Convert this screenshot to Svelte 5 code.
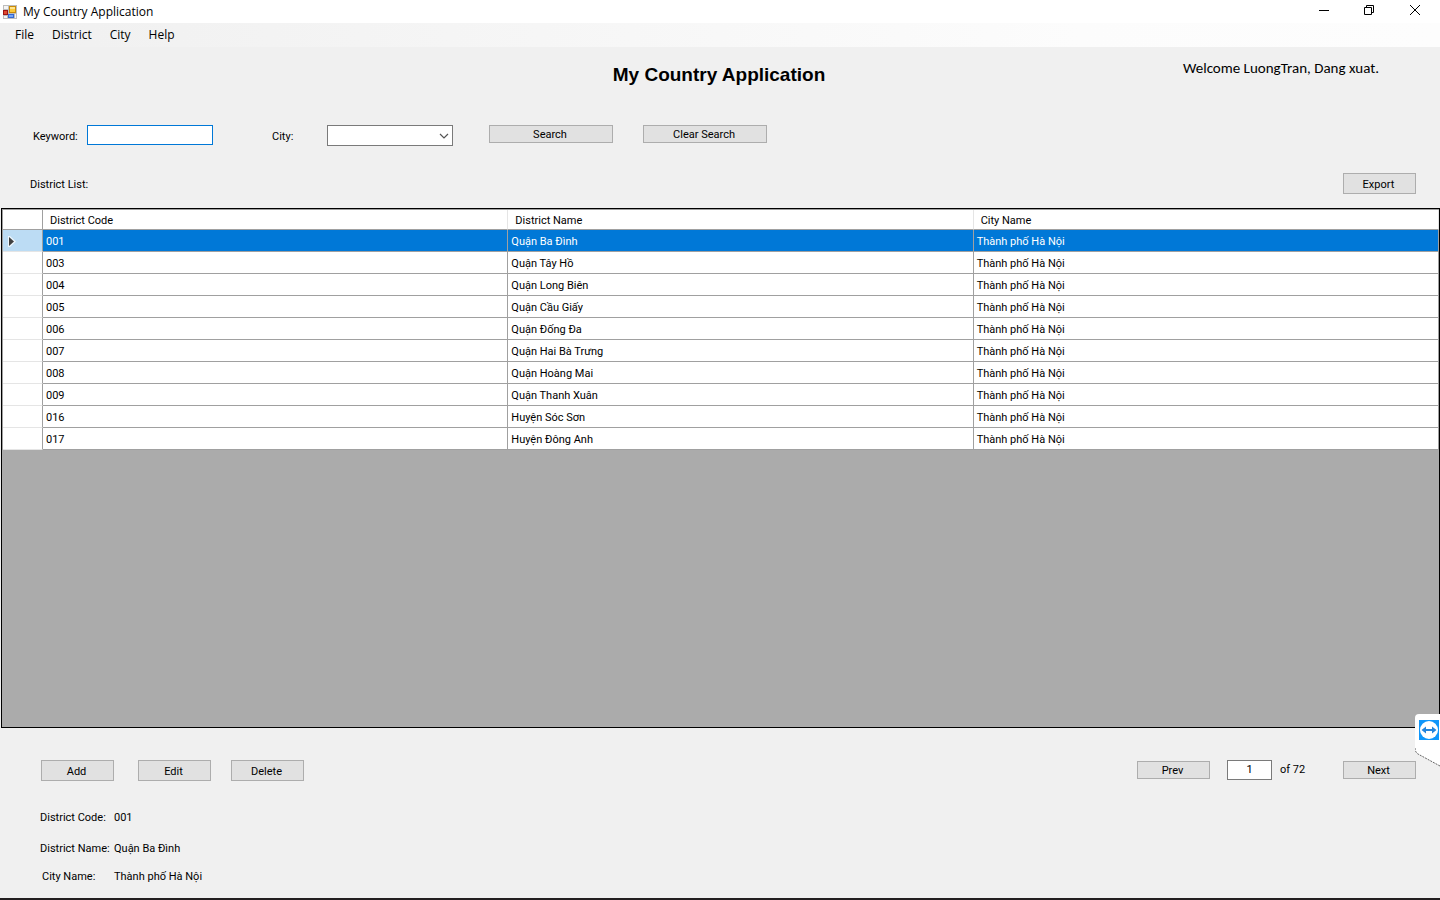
<script>
  const menus = ['File', 'District', 'City', 'Help'];
  const rows = [
    ['001', 'Quận Ba Đình'],
    ['003', 'Quận Tây Hồ'],
    ['004', 'Quận Long Biên'],
    ['005', 'Quận Cầu Giấy'],
    ['006', 'Quận Đống Đa'],
    ['007', 'Quận Hai Bà Trưng'],
    ['008', 'Quận Hoàng Mai'],
    ['009', 'Quận Thanh Xuân'],
    ['016', 'Huyện Sóc Sơn'],
    ['017', 'Huyện Đông Anh']
  ].map(([code, name]) => ({ code, name, city: 'Thành phố Hà Nội' }));

  let selected = $state(0);
  let keyword = $state('');
  let city = $state('');
  let page = $state('1');
  const current = $derived(rows[selected]);
</script>

<div class="window">
  <header class="titlebar">
    <svg class="appicon" width="14" height="14" viewBox="0 0 14 14" aria-hidden="true">
      <path d="M0 0h14v14H0z" fill="#bdbdbd" />
      <path d="M1 1h4v3H1zM1 11h3v2H1zM12 9h1v4h-1z" fill="#f4f4f4" />
      <path d="M6 1h7v7H6z" fill="#c98a08" />
      <path d="M7 2h5v5H7z" fill="#fbc93a" />
      <path d="M7 2h5v2H7z" fill="#ffe48b" />
      <path d="M0 5h5v5H0z" fill="#9d1414" />
      <path d="M1 6h3v3H1z" fill="#e0492f" />
      <path d="M5 9h6v4H5z" fill="#3668cf" />
      <path d="M6 10h4v2H6z" fill="#76a5f5" />
    </svg>
    <span class="caption">My Country Application</span>
    <div class="winbuttons">
      <button aria-label="Minimize">
        <svg width="12" height="12" viewBox="0 0 12 12"><path d="M1 5.500h10" stroke="#000" /></svg>
      </button>
      <button aria-label="Restore">
        <svg width="12" height="12" viewBox="0 0 12 12" fill="none" stroke="#000">
          <path d="M1.500 2.500h7v7h-7zM3.500 2.500v-2h7v7h-2" />
        </svg>
      </button>
      <button aria-label="Close">
        <svg width="12" height="12" viewBox="0 0 12 12"><path d="M1 0l10 10M11 0L1 10" stroke="#000" /></svg>
      </button>
    </div>
  </header>

  <nav class="menubar">
    {#each menus as item}
      <button>{item}</button>
    {/each}
  </nav>

  <div class="heading">
    <h1>My Country Application</h1>
    <p>Welcome LuongTran, Dang xuat.</p>
  </div>

  <form class="search" onsubmit={(e) => e.preventDefault()}>
    <label class="kw" for="keyword">Keyword:</label>
    <input id="keyword" type="text" bind:value={keyword} />
    <label class="ct" for="city">City:</label>
    <div class="combo">
      <select id="city" bind:value={city}>
        <option value=""></option>
        <option>Thành phố Hà Nội</option>
      </select>
      <svg width="10" height="6" viewBox="0 0 10 6" aria-hidden="true">
        <path d="M1 1l4 4 4-4" fill="none" stroke="#555" stroke-width="1.200" />
      </svg>
    </div>
    <button class="btn wide first" type="submit">Search</button>
    <button class="btn wide" type="reset">Clear Search</button>
  </form>

  <div class="listbar">
    <span>District List:</span>
    <button class="btn tall">Export</button>
  </div>

  <main class="grid">
    <table>
      <colgroup><col class="mark" /><col /><col /><col /></colgroup>
      <thead>
        <tr><th></th><th>District Code</th><th>District Name</th><th>City Name</th></tr>
      </thead>
      <tbody>
        {#each rows as row, i}
          <tr class:selected={i === selected} onclick={() => (selected = i)}>
            <td class="rowhead">
              {#if i === selected}
                <svg width="8" height="11" viewBox="0 0 8 11" aria-hidden="true">
                  <path d="M0 0h2l6 5.500-6 5.500H0z" fill="#fff" opacity=".7" />
                  <path d="M1 1l5 4.500-5 4.500z" fill="#404040" />
                </svg>
              {/if}
            </td>
            <td>{row.code}</td>
            <td>{row.name}</td>
            <td>{row.city}</td>
          </tr>
        {/each}
      </tbody>
    </table>
  </main>

  <div class="actions">
    <button class="btn tall">Add</button>
    <button class="btn tall">Edit</button>
    <button class="btn tall">Delete</button>
    <div class="pager">
      <button class="btn">Prev</button>
      <input type="text" aria-label="Page" bind:value={page} />
      <span>of 72</span>
      <button class="btn">Next</button>
    </div>
  </div>

  <dl class="details">
    <dt>District Code:</dt><dd>{current.code}</dd>
    <dt>District Name:</dt><dd>{current.name}</dd>
    <dt class="in">City Name:</dt><dd>{current.city}</dd>
  </dl>

  <div class="taskbar"></div>

  <svg class="remote" width="25" height="54" viewBox="0 0 25 54" aria-hidden="true">
    <path d="M25 0H4Q0 0 0 4V35Q0 38 3 40L25 52z" fill="#fff" />
    <path d="M0 34Q0 38 3 40L25 52" fill="none" stroke="#666" stroke-dasharray="2 1" />
    <path d="M4 6h20v20H4z" fill="#0f96fa" />
    <circle cx="14" cy="16" r="9" fill="#fff" />
    <path d="M6.500 16l4.500-3.500v2.500h6v-2.500l4.500 3.500-4.500 3.500v-2.500h-6v2.500z" fill="#2384dc" />
  </svg>
</div>

<style>
  :global(body) {
    margin: 0;
  }
  .window {
    position: relative;
    display: flex;
    flex-direction: column;
    min-height: 100vh;
    background: #f0f0f0;
    color: #000;
    font: 11px/16px Roboto, "Liberation Sans", sans-serif;
  }
  button,
  input,
  select {
    box-sizing: border-box;
    margin: 0;
    padding: 0;
    border: 0;
    border-radius: 0;
    outline: none;
    color: inherit;
    font: inherit;
  }
  .titlebar {
    display: flex;
    align-items: center;
    height: 23px;
    padding-left: 3px;
    background: #fff;
    font-family: "Open Sans", sans-serif;
    font-size: 12px;
  }
  .caption {
    margin-left: 6px;
  }
  .winbuttons {
    display: flex;
    height: 100%;
    margin-left: auto;
    padding-right: 2px;
  }
  .winbuttons button {
    display: grid;
    place-items: center;
    width: 46px;
    height: 21px;
    background: none;
  }
  .winbuttons button:first-child {
    width: 44px;
  }
  .menubar {
    display: flex;
    height: 24px;
    padding-left: 6px;
    background: linear-gradient(90deg, #f0f0f0, #fcfcfc 75%, #fdfdfd);
    font-family: "Open Sans", sans-serif;
    font-size: 12px;
  }
  .menubar button {
    padding: 0 9px;
    background: none;
  }
  .heading {
    display: grid;
    grid-template-columns: 1fr auto 1fr;
    height: 78px;
    padding: 12px 2px 0 0;
    box-sizing: border-box;
  }
  h1 {
    grid-column: 2;
    margin: 0;
    font: bold 19px/32px "Liberation Sans", sans-serif;
  }
  .heading p {
    justify-self: end;
    margin: 0 59px 0 0;
    font: 15px/18px Carlito, Lato, sans-serif;
  }
  .search {
    display: flex;
    align-items: flex-start;
    height: 48px;
    padding-left: 33px;
  }
  .search label {
    line-height: 24px;
  }
  .kw {
    width: 54px;
  }
  .ct {
    width: 55px;
    margin-left: 59px;
  }
  .search input {
    width: 126px;
    height: 20px;
    padding: 0 3px;
    border: 1px solid #0078d7;
    background: #fff;
  }
  .combo {
    position: relative;
    width: 126px;
    height: 21px;
  }
  .combo select {
    width: 100%;
    height: 100%;
    padding: 0 18px 0 3px;
    border: 1px solid #7a7a7a;
    background: #fff;
    appearance: none;
  }
  .combo svg {
    position: absolute;
    top: 8px;
    right: 4px;
    pointer-events: none;
  }
  .btn {
    width: 73px;
    height: 18px;
    padding: 1px 2px 0 0;
    border: 1px solid #adadad;
    background: #e1e1e1;
    line-height: 15px;
    text-align: center;
  }
  .wide {
    width: 124px;
    margin-left: 30px;
  }
  .wide.first {
    margin-left: 36px;
  }
  .tall {
    height: 21px;
  }
  .listbar {
    display: flex;
    justify-content: space-between;
    height: 35px;
    padding: 0 24px 0 30px;
    line-height: 24px;
  }
  .grid {
    flex: 1;
    margin-left: 1px;
    border: 1px solid #000;
    background: #ababab;
  }
  table {
    width: 100%;
    table-layout: fixed;
    border-collapse: separate;
    border-spacing: 0;
    border-top: 1px solid #a0a0a0;
    border-left: 1px solid #a0a0a0;
  }
  .mark {
    width: 40px;
  }
  th,
  td {
    box-sizing: border-box;
    height: 22px;
    padding: 2px 3px 0;
    border-right: 1px solid #a0a0a0;
    border-bottom: 1px solid #a0a0a0;
    background: #fff;
    line-height: 19px;
    text-align: left;
    white-space: nowrap;
  }
  th {
    height: 20px;
    padding: 2px 7px 0;
    border-right-color: #e5e5e5;
    font-weight: 400;
    line-height: 17px;
  }
  th:first-child {
    border-right-color: #a0a0a0;
  }
  .rowhead {
    padding: 2px 5px 0;
    border-bottom-color: #e5e5e5;
  }
  .rowhead svg {
    display: block;
  }
  .selected td {
    background: #0078d7;
    color: #fff;
  }
  .selected .rowhead {
    background: #bcdcf4;
  }
  .actions {
    display: flex;
    height: 45px;
    padding: 32px 24px 0 41px;
    line-height: 20px;
  }
  .actions > .btn:nth-child(2) {
    margin: 0 20px 0 24px;
  }
  .pager {
    display: flex;
    align-items: flex-start;
    margin-left: auto;
  }
  .pager .btn {
    margin-top: 1px;
  }
  .pager input {
    width: 45px;
    height: 20px;
    margin: 0 8px 0 17px;
    border: 1px solid #7a7a7a;
    background: #fff;
    text-align: center;
  }
  .pager span {
    width: 63px;
  }
  .details {
    display: grid;
    grid-template-columns: 74px auto;
    grid-template-rows: 26px 36px 20px;
    align-items: center;
    margin: 0;
    padding: 0 0 11px 40px;
    white-space: nowrap;
  }
  dd {
    margin: 0;
  }
  .in {
    padding-left: 2px;
  }
  .taskbar {
    height: 2px;
    background: #231f20;
  }
  .remote {
    position: absolute;
    right: 0;
    bottom: 132px;
  }
</style>
